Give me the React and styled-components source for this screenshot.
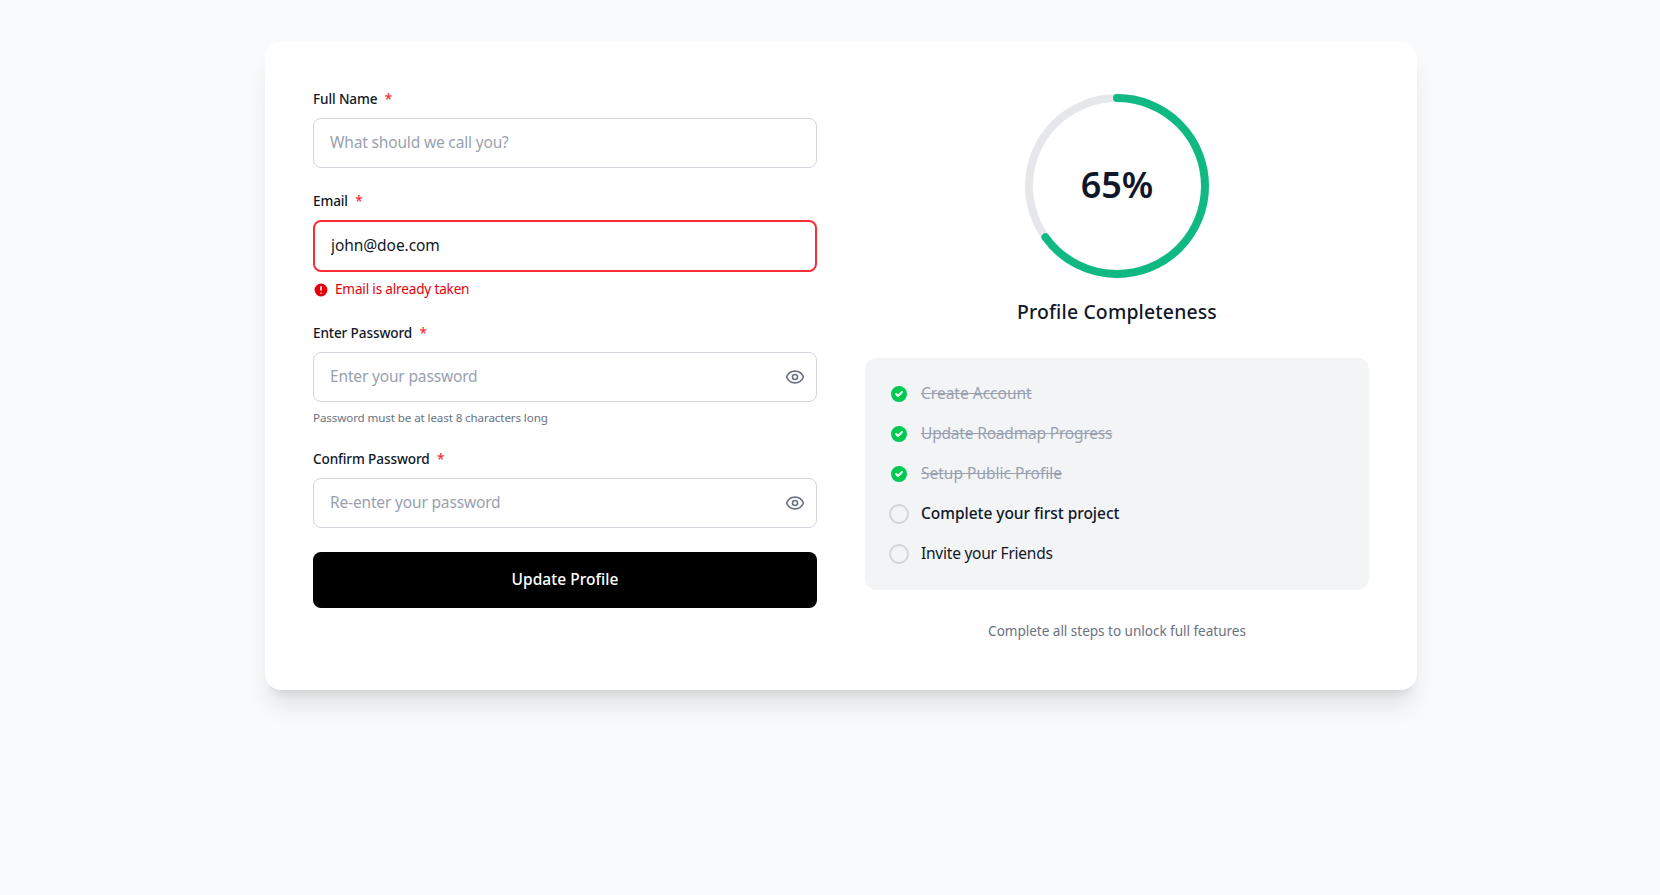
import React from "react";
import styled, { createGlobalStyle, css } from "styled-components";
import { Eye } from "lucide-react";
import { HiCheckCircle, HiExclamationCircle } from "react-icons/hi";

const GlobalStyle = createGlobalStyle`
  *, *::before, *::after { box-sizing: border-box; }
  body {
    margin: 0;
    min-height: 100vh;
    background: #f9fafb;
    color: #101828;
    font-family: "Noto Sans", sans-serif;
    font-size: 15.52px;
    line-height: 24px;
  }
  h2, p, ul { margin: 0; padding: 0; }
`;

const Page = styled.main`
  display: flex;
  justify-content: center;
  padding: 42px 0 42px 22px;
`;

const Card = styled.section`
  display: grid;
  grid-template-columns: 1fr 1fr;
  gap: 48px;
  width: 1152px;
  padding: 48px;
  border-radius: 16px;
  background: #fff;
  box-shadow: 0 20px 25px -5px rgba(0, 0, 0, 0.1), 0 8px 10px -6px rgba(0, 0, 0, 0.1);
`;

const Form = styled.form`
  display: flex;
  flex-direction: column;
  gap: 24px;
`;

const Field = styled.div`
  display: flex;
  flex-direction: column;
  gap: 8px;
`;

const Label = styled.label`
  padding-bottom: 2px;
  font-size: 13.58px;
  font-weight: 500;
  line-height: 18px;
  letter-spacing: -0.12px;
`;

const Required = styled.span`
  margin-left: 4px;
  color: #fb2c36;
`;

const InputBox = styled.div`
  display: flex;
  align-items: center;
  height: ${(p) => (p.$invalid ? 52 : 50)}px;
  padding: 0 12px 0 16px;
  border-radius: 8px;
  ${(p) =>
    p.$invalid
      ? css`border: 2px solid #fb2c36;`
      : css`border: 1px solid #d1d5dc;`}
`;

const Input = styled.input`
  flex: 1;
  min-width: 0;
  height: 24px;
  padding: 0 0 2px;
  border: 0;
  outline: 0;
  background: transparent;
  color: #101828;
  font: inherit;
  line-height: 22px;
  letter-spacing: -0.08px;
  &::placeholder {
    color: #99a1af;
    opacity: 1;
    letter-spacing: -0.17px;
  }
`;

const IconButton = styled.button`
  display: flex;
  margin-right: -1px;
  padding: 0;
  border: 0;
  background: none;
  color: #6a7282;
`;

const ErrorText = styled.p`
  display: flex;
  align-items: center;
  gap: 6px;
  color: #e7000b;
  font-size: 13.58px;
  letter-spacing: -0.18px;
  span {
    padding-bottom: 2px;
    line-height: 18px;
  }
`;

const Hint = styled.p`
  color: #6a7282;
  font-size: 11.64px;
  line-height: 16px;
  letter-spacing: -0.12px;
`;

const SubmitButton = styled.button`
  height: 56px;
  padding: 0 0 2px;
  border: 0;
  border-radius: 8px;
  background: #000;
  color: #fff;
  font: inherit;
  font-weight: 500;
  letter-spacing: 0.04px;
`;

const Progress = styled.div`
  display: flex;
  flex-direction: column;
  align-items: center;
`;

const Ring = styled.div`
  display: grid;
  place-items: center;
  width: 192px;
  height: 192px;
  & > * { grid-area: 1 / 1; }
`;

const Percent = styled.span`
  padding-bottom: 2px;
  font-size: 36px;
  font-weight: 600;
  line-height: 40px;
`;

const Title = styled.h2`
  margin-top: 16px;
  font-size: 19.4px;
  font-weight: 500;
  line-height: 28px;
  letter-spacing: 0.16px;
`;

const Steps = styled.ul`
  display: flex;
  flex-direction: column;
  gap: 16px;
  width: 100%;
  margin-top: 32px;
  padding: 24px;
  border-radius: 12px;
  background: #f3f4f6;
  list-style: none;
`;

const Step = styled.li`
  display: flex;
  align-items: center;
  gap: 12px;
  height: 24px;
`;

const StepText = styled.span`
  padding-bottom: 2px;
  line-height: 22px;
  letter-spacing: ${(p) => p.$tracking}px;
  font-weight: ${(p) => (p.$state === "current" ? 500 : 400)};
  ${(p) =>
    p.$state === "done" &&
    css`
      color: #99a1af;
      text-decoration: line-through;
      text-decoration-thickness: 1px;
    `}
`;

const EmptyCircle = styled.span`
  width: 20px;
  height: 20px;
  border: 2px solid #d1d5dc;
  border-radius: 50%;
`;

const Footnote = styled.p`
  margin-top: 32px;
  padding-bottom: 2px;
  color: #6a7282;
  font-size: 13.58px;
  line-height: 18px;
  letter-spacing: -0.04px;
`;

const fields = [
  { id: "name", label: "Full Name", placeholder: "What should we call you?" },
  { id: "email", label: "Email", value: "john@doe.com", error: "Email is already taken" },
  {
    id: "password",
    label: "Enter Password",
    placeholder: "Enter your password",
    secret: true,
    hint: "Password must be at least 8 characters long",
  },
  { id: "confirm", label: "Confirm Password", placeholder: "Re-enter your password", secret: true },
];

const steps = [
  { text: "Create Account", state: "done", tracking: 0 },
  { text: "Update Roadmap Progress", state: "done", tracking: -0.19 },
  { text: "Setup Public Profile", state: "done", tracking: 0 },
  { text: "Complete your first project", state: "current", tracking: -0.04 },
  { text: "Invite your Friends", state: "todo", tracking: -0.24 },
];

const RADIUS = 88;
const LENGTH = 2 * Math.PI * RADIUS;

function FormField({ id, label, placeholder, value, error, hint, secret }) {
  return (
    <Field>
      <Label htmlFor={id}>
        {label} <Required>*</Required>
      </Label>
      <InputBox $invalid={Boolean(error)}>
        <Input id={id} type={secret ? "password" : "text"} placeholder={placeholder} defaultValue={value} />
        {secret && (
          <IconButton type="button" aria-label="Show password">
            <Eye size={20} />
          </IconButton>
        )}
      </InputBox>
      {error && (
        <ErrorText>
          <HiExclamationCircle size={16} />
          <span>{error}</span>
        </ErrorText>
      )}
      {hint && <Hint>{hint}</Hint>}
    </Field>
  );
}

function ProgressRing({ value }) {
  return (
    <Ring>
      <svg width="192" height="192" viewBox="0 0 192 192" fill="none" strokeWidth="8">
        <circle cx="96" cy="96" r={RADIUS} stroke="#e5e7eb" />
        <circle
          cx="96"
          cy="96"
          r={RADIUS}
          stroke="#10b981"
          strokeLinecap="round"
          strokeDasharray={LENGTH}
          strokeDashoffset={LENGTH * (1 - value / 100)}
          transform="rotate(-90 96 96)"
        />
      </svg>
      <Percent>{value}%</Percent>
    </Ring>
  );
}

export default function App() {
  return (
    <>
      <GlobalStyle />
      <Page>
        <Card>
          <Form>
            {fields.map((field) => (
              <FormField key={field.id} {...field} />
            ))}
            <SubmitButton type="button">Update Profile</SubmitButton>
          </Form>
          <Progress>
            <ProgressRing value={65} />
            <Title>Profile Completeness</Title>
            <Steps>
              {steps.map(({ text, state, tracking }) => (
                <Step key={text}>
                  {state === "done" ? <HiCheckCircle size={20} color="#00c951" /> : <EmptyCircle />}
                  <StepText $state={state} $tracking={tracking}>
                    {text}
                  </StepText>
                </Step>
              ))}
            </Steps>
            <Footnote>Complete all steps to unlock full features</Footnote>
          </Progress>
        </Card>
      </Page>
    </>
  );
}
